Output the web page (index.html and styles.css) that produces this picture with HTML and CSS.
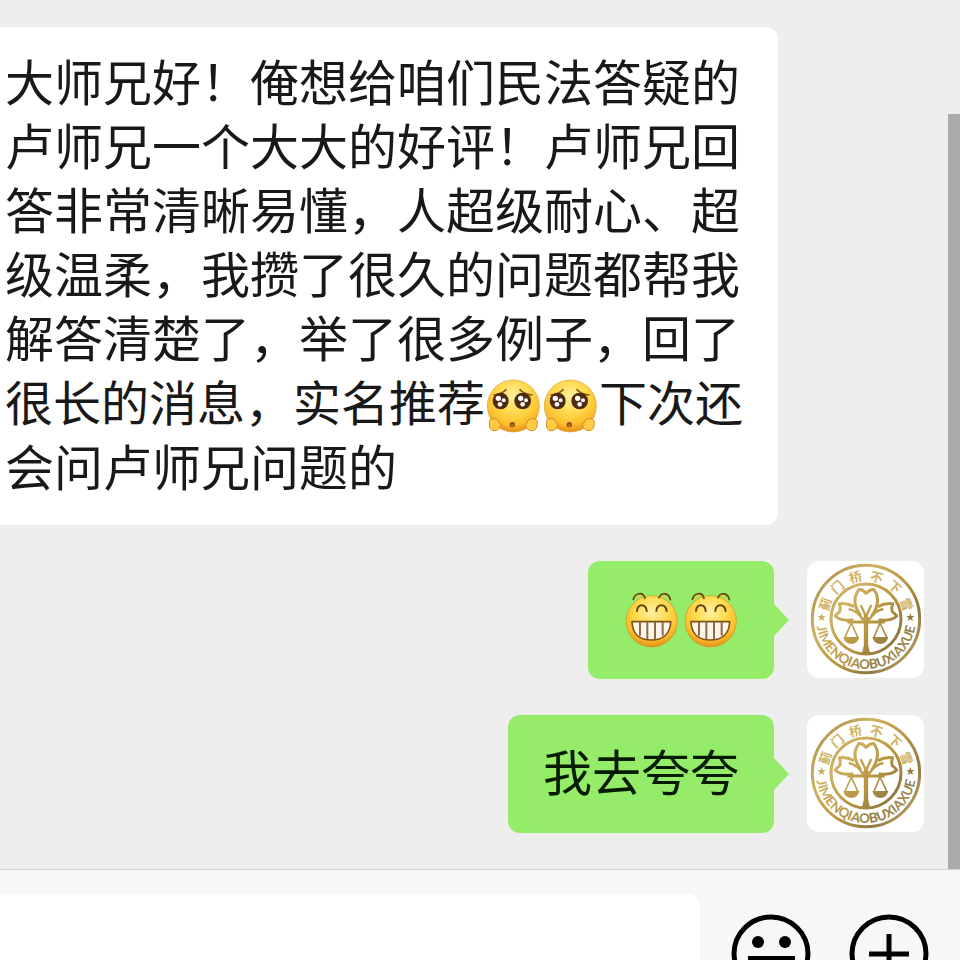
FILE: index.html
```html
<!doctype html>
<html lang="zh-CN">
  <head>
    <meta charset="UTF-8" />
    <meta name="viewport" content="width=device-width, initial-scale=1.0" />
    <title>聊天</title>
    <link rel="stylesheet" href="styles.css">
  </head>
  <body>
    <!-- shared drawings -->
    <svg class="defs" width="0" height="0" aria-hidden="true">
      <defs>
        <radialGradient id="face" cx="50%" cy="32%" r="68%">
          <stop offset="0%" stop-color="#fff0a0" />
          <stop offset="45%" stop-color="#ffdb4e" />
          <stop offset="80%" stop-color="#fbbd2c" />
          <stop offset="100%" stop-color="#e58e1c" />
        </radialGradient>
        <linearGradient id="gold" gradientUnits="userSpaceOnUse" x1="30" y1="60" x2="365" y2="330">
          <stop offset="0%" stop-color="#a98d45" />
          <stop offset="30%" stop-color="#d0b263" />
          <stop offset="55%" stop-color="#b8953f" />
          <stop offset="75%" stop-color="#8f7842" />
          <stop offset="100%" stop-color="#cdb066" />
        </linearGradient>
        <path id="ring-text" d="M48 192 A150 150 0 0 0 348 192" />

        <symbol id="pleading" viewBox="15 23 171 168">
          <circle cx="100" cy="107" r="78" fill="url(#face)" stroke="#d9a037" stroke-width="2" />
          <g fill="none" stroke="#8a5a16" stroke-width="5" stroke-linecap="round">
            <path d="M42 74 Q66 72 78 58" />
            <path d="M120 58 Q132 72 156 74" />
          </g>
          <g fill="#4d2a10">
            <ellipse cx="62" cy="92" rx="24" ry="25" />
            <ellipse cx="128" cy="92" rx="25" ry="25" />
          </g>
          <g fill="#fff">
            <circle cx="55" cy="84" r="8" />
            <circle cx="71" cy="90" r="6" />
            <circle cx="60" cy="102" r="7" />
            <circle cx="122" cy="84" r="8" />
            <circle cx="138" cy="90" r="6" />
            <circle cx="128" cy="102" r="7" />
          </g>
          <circle cx="97" cy="163" r="8" fill="#8c4a10" />
          <circle cx="97" cy="165" r="4" fill="#c9721f" />
          <g fill="#ffcb45" stroke="#d58d1e" stroke-width="3">
            <path d="M28 157 Q27 145 41 145 Q57 146 57 157 Q66 160 60 169 Q55 182 42 181 Q27 180 28 157Z" />
            <path d="M172 157 Q173 145 157 145 Q142 146 142 157 Q133 160 138 169 Q144 182 157 181 Q172 180 172 157Z" />
          </g>
        </symbol>

        <symbol id="grin" viewBox="131 115 171 168">
          <g fill="#b9dc55">
            <path d="M162 137 C164 120 190 106 197 133" />
            <path d="M239 130 C247 109 272 119 273 138" />
          </g>
          <circle cx="217" cy="203" r="77" fill="url(#face)" stroke="#d49127" stroke-width="2" />
          <g fill="none" stroke="#66430f" stroke-width="6" stroke-linecap="round">
            <path d="M173 172 C175 149 200 149 202 172" />
            <path d="M231 172 C233 149 259 149 262 172" />
            <path d="M162 137 C167 118 191 112 197 134" stroke-width="5" />
            <path d="M239 132 C248 112 270 120 273 138" stroke-width="5" />
          </g>
          <path d="M158 204 H274 C273 242 249 259 216 259 C183 259 159 242 158 204Z" fill="#fff6ea" stroke="#80500f" stroke-width="5" stroke-linejoin="round" />
          <path d="M182 205 V246 M204 205 V257 M227 205 V257 M250 205 V246" stroke="#8e6a48" stroke-width="6" />
        </symbol>

        <symbol id="crest" viewBox="21 18 351 351">
          <g fill="none" stroke="url(#gold)">
            <circle cx="198" cy="192" r="161" stroke-width="9" />
            <circle cx="198" cy="192" r="105" stroke-width="9" />
            <!-- petals -->
            <g stroke-width="9" stroke-linejoin="round">
              <path d="M182 182 C160 152 160 126 177 103 Q189 104 198 115 Q209 104 221 103 C238 125 236 152 216 182" />
              <path d="M162 155 Q141 143 118 146 Q123 158 119 170 Q111 176 106 183 Q122 200 160 194" />
              <path d="M234 155 Q255 143 278 146 Q273 158 277 170 Q285 176 290 183 Q274 200 236 194" />
              <path d="M146 162 Q174 168 188 194 M250 162 Q222 168 208 194" stroke-width="7" />
              <path d="M182 150 L196 180 M214 150 L200 180" stroke-width="7" />
            </g>
            <!-- scales -->
            <path d="M142 201 H254" stroke-width="9" />
            <path d="M198 180 V288" stroke-width="13" />
            <path d="M154 204 L134 249 M154 204 L174 249 M240 204 L221 249 M240 204 L261 249" stroke-width="5" />
          </g>
          <g fill="url(#gold)">
            <path d="M130 246 H178 Q173 267 154 267 Q135 267 130 246Z" />
            <path d="M217 246 H265 Q260 267 241 267 Q222 267 217 246Z" />
            <circle cx="198" cy="196" r="11" />
            <path d="M192 270 H204 L210 294 H186Z" />
            <path d="M65 174 L68 183 L77 183 L70 189 L73 198 L65 193 L57 198 L60 189 L53 183 L62 183Z" />
            <path d="M331 174 L334 183 L343 183 L336 189 L339 198 L331 193 L323 198 L326 189 L319 183 L328 183Z" />
          </g>
          <g class="crest-name" fill="url(#gold)" text-anchor="middle">
            <text x="198" y="77" transform="rotate(-70 198 192)">蓟</text>
            <text x="198" y="77" transform="rotate(-42 198 192)">门</text>
            <text x="198" y="77" transform="rotate(-14 198 192)">桥</text>
            <text x="198" y="77" transform="rotate(14 198 192)">不</text>
            <text x="198" y="77" transform="rotate(42 198 192)">下</text>
            <text x="198" y="77" transform="rotate(70 198 192)">雪</text>
          </g>
          <text class="crest-latin" fill="url(#gold)" text-anchor="middle">
            <textPath href="#ring-text" startOffset="50%">JIMENQIAOBUXIAXUE</textPath>
          </text>
        </symbol>
      </defs>
    </svg>

    <main class="chat">
      <div class="row incoming">
        <p class="bubble">大师兄好！俺想给咱们民法答疑的卢师兄一个大大的好评！卢师兄回答非常清晰易懂，人超级耐心、超级温柔，我攒了很久的问题都帮我解答清楚了，举了很多例子，回了<span class="with-emoji">很长的消息，实名推荐<svg class="emoji" role="img" aria-label="可怜"><use href="#pleading" /></svg><svg class="emoji" role="img" aria-label="可怜"><use href="#pleading" /></svg>下次还</span>会问卢师兄问题的</p>
      </div>
      <div class="row outgoing">
        <p class="bubble"><svg class="emoji" role="img" aria-label="呲牙"><use href="#grin" /></svg><svg class="emoji" role="img" aria-label="呲牙"><use href="#grin" /></svg></p>
        <svg class="avatar" role="img" aria-label="头像"><use href="#crest" /></svg>
      </div>
      <div class="row outgoing">
        <p class="bubble">我去夸夸</p>
        <svg class="avatar" role="img" aria-label="头像"><use href="#crest" /></svg>
      </div>
      <div class="scroll-thumb"></div>
    </main>

    <form class="composer">
      <input class="message-input" type="text" aria-label="消息" />
      <button class="icon-button" type="button" aria-label="表情">
        <svg viewBox="0 0 80 80">
          <circle cx="40" cy="40" r="37" fill="none" stroke="#000" stroke-width="5" />
          <circle cx="27" cy="28" r="6" />
          <circle cx="54" cy="28" r="6" />
          <path d="M17 44 H64" stroke="#000" stroke-width="4" />
          <path d="M19 44 C20 58 28 66 40 66 C53 66 61 58 62 44" fill="none" stroke="#000" stroke-width="4" />
        </svg>
      </button>
      <button class="icon-button" type="button" aria-label="更多">
        <svg viewBox="0 0 80 80">
          <circle cx="40" cy="40" r="37" fill="none" stroke="#000" stroke-width="5" />
          <path d="M40 20 V60 M20 40 H60" stroke="#000" stroke-width="5" />
        </svg>
      </button>
    </form>
  </body>
</html>
```

FILE: styles.css
```css
body {
  margin: 0;
  background-color: #f7f7f7;
  font-family: "Liberation Sans", "Noto Sans CJK SC", sans-serif;
  overflow: hidden;
}
.defs {
  position: absolute;
}
.chat {
  position: relative;
  display: flex;
  flex-direction: column;
  gap: 36px;
  padding: 27px 36px 36px 0;
  background-color: #eeeeee;
}
.row {
  display: flex;
  align-items: flex-start;
}
.incoming {
  padding-right: 146px;
}
.outgoing {
  justify-content: flex-end;
  gap: 33px;
}
.bubble {
  position: relative;
  margin: 0;
  border-radius: 12px;
  font-size: 49px;
  line-height: 64px;
  color: #191919;
}
.incoming .bubble {
  flex: 1;
  padding: 25px 30px 24px 5px;
  border-radius: 0 12px 12px 0;
  background-color: #ffffff;
}
.outgoing .bubble {
  display: flex;
  align-items: center;
  gap: 2px;
  box-sizing: border-box;
  min-height: 118px;
  padding: 24px 35px;
  background-color: #95ec69;
  color: #061c02;
}
/* little arrow pointing at the avatar */
.outgoing .bubble::after {
  content: "";
  position: absolute;
  left: 100%;
  top: 50%;
  margin-top: -16px;
  border: 16px solid transparent;
  border-left: 15px solid #95ec69;
  border-right: 0;
}
.with-emoji {
  font-size: 48px;
}
.emoji {
  width: 57px;
  height: 56px;
  vertical-align: -13px;
}
.avatar {
  width: 117px;
  height: 117px;
  border-radius: 12px;
  background-color: #ffffff;
}
.crest-name {
  font-size: 38px;
  font-weight: 700;
}
.crest-latin {
  font-family: Lato, sans-serif;
  font-size: 40px;
  font-weight: 700;
}
.scroll-thumb {
  position: absolute;
  top: 114px;
  right: 0;
  bottom: 0;
  width: 12px;
  background-color: #ababab;
}
.composer {
  display: flex;
  align-items: center;
  gap: 38px;
  padding: 24px 31px 24px 0;
  border-top: 1px solid #d2d2d2;
}
.message-input {
  flex: 1;
  min-width: 0;
  height: 120px;
  box-sizing: border-box;
  margin-right: -7px;
  padding: 0 24px;
  border: 0;
  border-radius: 0 12px 12px 0;
  background-color: #ffffff;
  font: inherit;
  font-size: 49px;
}
.icon-button {
  width: 80px;
  height: 80px;
  padding: 0;
  border: 0;
  background: none;
}
.icon-button svg {
  display: block;
  width: 100%;
  height: 100%;
}
```
